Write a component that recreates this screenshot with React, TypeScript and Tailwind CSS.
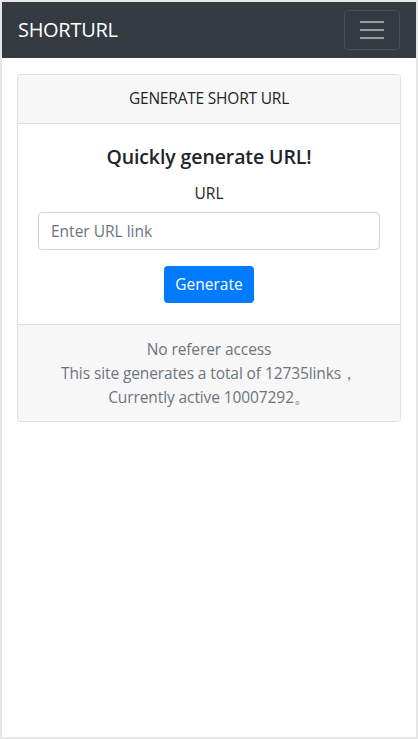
const font = { fontFamily: '"Open Sans", "Noto Sans", sans-serif' };

const App = () => {
  return (
    <div
      className="w-[418px] h-[739px] border-2 border-[#e6e6e6] bg-white text-[#212529]"
      style={font}
    >
      {/* Navbar */}
      <nav className="h-[56px] bg-[#343a40] flex items-center justify-between pl-4 pr-[14px]">
        <span className="text-white text-[20px] leading-none tracking-[-0.3px]">SHORTURL</span>
        <button className="w-[56px] h-[40px] mr-[2px] border border-[#4a4f55] rounded-[4px] flex flex-col items-center justify-center gap-[6px]">
          <span className="block w-[24px] h-[2px] bg-[#9a9da0]" />
          <span className="block w-[24px] h-[2px] bg-[#9a9da0]" />
          <span className="block w-[24px] h-[2px] bg-[#9a9da0]" />
        </button>
      </nav>

      {/* Card */}
      <div className="mx-[15px] mt-4 border border-[#dfdfdf] rounded-[4px] overflow-hidden">
        <div className="h-[49px] bg-[#f7f7f7] border-b border-[#dfdfdf] flex items-center justify-center text-[15.5px] tracking-[-0.2px]">
          GENERATE SHORT URL
        </div>

        <div className="px-5 pt-[23px] pb-[21px] flex flex-col items-center">
          <h2 className="text-[19.5px] font-semibold leading-none tracking-[-0.1px]">Quickly generate URL!</h2>
          <label className="mt-[19px] text-[15.5px] leading-none">URL</label>
          <input
            type="text"
            placeholder="Enter URL link"
            className="mt-[11px] w-full h-[38px] px-3 border border-[#ced4da] rounded-[4px] text-[15.5px] placeholder:text-[#6c757d] outline-none"
            style={font}
          />
          <button className="mt-4 w-[90px] h-[37px] bg-[#007bff] text-white rounded-[4px] text-[15.5px]">
            Generate
          </button>
        </div>

        <div className="bg-[#f7f7f7] border-t border-[#dfdfdf] pt-[12px] pb-[12px] text-center text-[#6c757d] text-[15.5px] leading-[24px] tracking-[-0.1px]">
          <div>No referer access</div>
          <div>This site generates a total of 12735links，</div>
          <div>Currently active 10007292。</div>
        </div>
      </div>
    </div>
  );
};

export default App;
